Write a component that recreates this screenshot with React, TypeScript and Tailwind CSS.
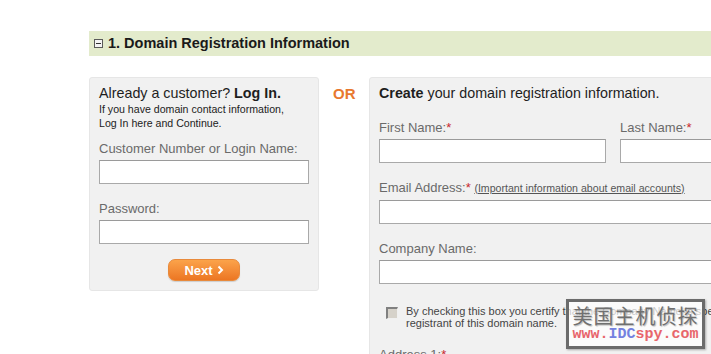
import React from "react";

function Input({ className = "" }: { className?: string }) {
  return <div className={"h-[24px] bg-white border border-[#a9a9a9] border-t-[#9a9a9a] " + className} />;
}

function Label({ children }: { children: React.ReactNode }) {
  return <div className="text-[13px] leading-[15px] text-[#6a6a6a] whitespace-nowrap mb-[4px]">{children}</div>;
}

const Star = () => <span className="text-[#c8282d]">*</span>;

export default function App() {
  return (
    <div className="w-[711px] h-[354px] overflow-hidden bg-white font-['Liberation_Sans',Arial,sans-serif] pl-[89px] pt-[31px] relative">
      {/* header */}
      <div className="h-[25px] bg-[#e3ebcc] flex items-center pl-[5px] w-[700px]">
        <div className="w-[9px] h-[9px] border border-[#5a5a5a] bg-[#f4f4f4] flex items-center justify-center">
          <div className="w-[5px] h-[1px] bg-[#333]" />
        </div>
        <div className="ml-[5px] text-[14.5px] font-bold text-[#1a1a1a] leading-[17px] whitespace-nowrap">
          1. Domain Registration Information
        </div>
      </div>

      <div className="mt-[21px] flex items-start">
        {/* left panel */}
        <div className="w-[230px] h-[214px] shrink-0 bg-[#f1f1f1] border border-[#e6e6e6] rounded-[3px] pl-[9px] pr-[9px] pt-[7px]">
          <div className="text-[14.3px] leading-[17px] text-[#1e1e1e] whitespace-nowrap">
            Already a customer? <span className="font-bold">Log In.</span>
          </div>
          <div className="text-[10.6px] leading-[14px] text-[#222] whitespace-nowrap">
            If you have domain contact information,
            <br />
            Log In here and Continue.
          </div>
          <div className="mt-[11px]">
            <Label>Customer Number or Login Name:</Label>
            <Input className="w-[210px]" />
          </div>
          <div className="mt-[17px]">
            <Label>Password:</Label>
            <Input className="w-[210px]" />
          </div>
          <div className="mt-[15px] flex justify-center">
            <div className="w-[72px] h-[22px] rounded-[7px] bg-gradient-to-b from-[#fba34a] to-[#ec7622] border border-[#e88a3c] shadow-[0_1px_1px_rgba(0,0,0,0.15)] flex items-center justify-center gap-[4px] text-white font-bold text-[13px] leading-none">
              <span>Next</span>
              <svg width="7" height="10" viewBox="0 0 7 10">
                <path d="M1.5 1.5 L5 5 L1.5 8.5" stroke="white" strokeWidth="2" fill="none" />
              </svg>
            </div>
          </div>
        </div>

        {/* OR */}
        <div className="w-[50px] shrink-0 pl-[14px] pt-[8px] text-[15px] leading-[17px] font-bold text-[#e8782e]">OR</div>

        {/* right panel */}
        <div className="w-[420px] h-[320px] shrink-0 bg-[#f1f1f1] border border-[#e6e6e6] rounded-[3px] pl-[9px] pt-[7px]">
          <div className="text-[14.3px] leading-[17px] text-[#1e1e1e] whitespace-nowrap">
            <span className="font-bold">Create</span> your domain registration information.
          </div>
          <div className="mt-[18px] flex gap-[14px]">
            <div>
              <Label>
                First Name:<Star />
              </Label>
              <Input className="w-[227px]" />
            </div>
            <div>
              <Label>
                Last Name:<Star />
              </Label>
              <Input className="w-[200px]" />
            </div>
          </div>
          <div className="mt-[17px]">
            <Label>
              Email Address:<Star />{" "}
              <span className="text-[10.6px] text-[#555] underline">(Important information about email accounts)</span>
            </Label>
            <Input className="w-[400px]" />
          </div>
          <div className="mt-[17px]">
            <Label>Company Name:</Label>
            <Input className="w-[400px]" />
          </div>
          <div className="mt-[21px] flex pl-[7px]">
            <div className="w-[12px] h-[12px] mt-[2px] shrink-0 bg-[#d6d2ca] border-t-[2px] border-l-[2px] border-t-[#808080] border-l-[#808080] border-r border-b border-r-[#f0f0f0] border-b-[#f0f0f0]" />
            <div className="ml-[8px] text-[11px] leading-[12px] text-[#444] whitespace-nowrap">
              By checking this box you certify that the Company Name is specified as the
              <br />
              registrant of this domain name.
            </div>
          </div>
          <div className="mt-[18px]">
            <Label>
              Address 1:<Star />
            </Label>
          </div>
        </div>
      </div>

      {/* watermark overlay */}
      <div className="absolute left-[566px] top-[299px] w-[139px] h-[50px] border-[3px] border-[#6b6b6b] bg-[rgba(255,255,255,0.72)] flex flex-col items-center justify-center shadow-[1px_1px_2px_rgba(0,0,0,0.3)]">
        <div className="text-[20px] leading-[22px] text-[#707070] font-['Noto_Sans_CJK_SC',sans-serif] tracking-[1px] [text-shadow:1px_1px_1px_rgba(0,0,0,0.25)]">
          美国主机侦探
        </div>
        <div className="text-[15px] leading-[16px] font-bold font-['Liberation_Mono',monospace] whitespace-nowrap">
          <span className="text-[#e8666b]">www.</span>
          <span className="text-[#7481e0]">IDC</span>
          <span className="text-[#e8666b]">spy.com</span>
        </div>
      </div>
    </div>
  );
}
